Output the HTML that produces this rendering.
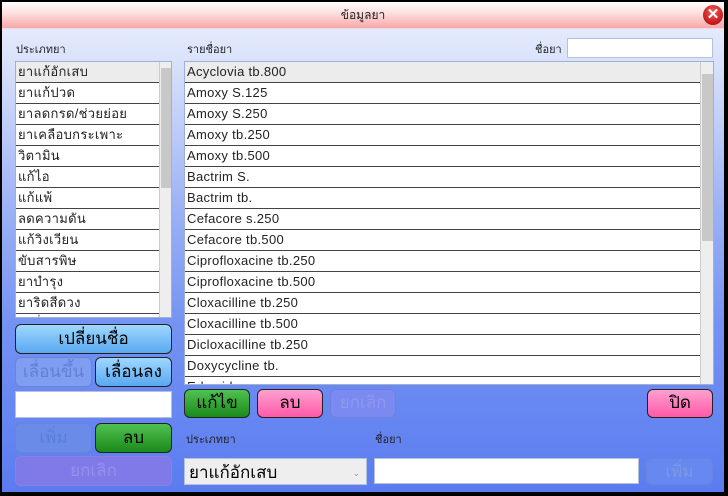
<!DOCTYPE html>
<html><head><meta charset="utf-8"><style>
*{box-sizing:border-box;margin:0;padding:0}
body{width:728px;height:496px;background:#000;position:relative;overflow:hidden;font-family:"Liberation Sans","Noto Sans CJK SC",sans-serif}
#win{position:absolute;left:2px;top:2px;width:722px;height:490px;background:linear-gradient(#eef2fd 0px,#d9e2fb 60px,#9fb4f6 200px,#7593f2 320px,#5a7cf0 490px);overflow:hidden}
#title{position:absolute;left:0;top:0;width:722px;height:27px;background:linear-gradient(#fff 0%,#fde0e0 40%,#f8a8a8 100%);border-bottom:1px solid #f0d8e8;text-align:center;font-size:12px;line-height:27px;color:#222}
#close{position:absolute;left:701px;top:3px;width:20px;height:20px;border-radius:50%;background:radial-gradient(circle at 50% 35%,#f06060,#c41818 70%,#901010);color:#fff;font-size:15px;font-weight:bold;line-height:20px;text-align:center}
.a{position:absolute}
.lbl{font-size:11px;color:#222}
.list{position:absolute;background:#fff;border:1px solid #9fb0d0}
.row{height:21px;border-bottom:1px solid #444;font-size:13px;line-height:20px;padding-left:2px;color:#222;background:#fff;letter-spacing:0.3px}
.row.sel{background:#ececec}
.sb{position:absolute;top:0;bottom:0;background:#eeeeee;border-left:1px solid #ccc}
.th{position:absolute;left:1px;right:0;background:#c8c8c8}
.btn{position:absolute;border:1.5px solid #222;border-radius:6px;text-align:center;font-size:17px;color:#000}
.blue{background:linear-gradient(#9ed8ff,#5aa8f0)}
.green{background:linear-gradient(#50c050,#1a8a1a)}
.pink{background:linear-gradient(#ffa0d0,#ff5aa8)}
.dis{border-color:#6a84d8;color:#5f7fd8}
.inp{position:absolute;background:#fff;border:1px solid #b4c0dc}
</style></head><body>
<div id="win">
<div id="title">ข้อมูลยา</div>
<div id="close">✕</div>
</div>
<div class="a lbl" style="left:16px;top:40px">ประเภทยา</div>
<div class="a lbl" style="left:187px;top:40px">รายชื่อยา</div>
<div class="a lbl" style="left:535px;top:40px">ชื่อยา</div>
<div class="inp" style="left:567px;top:38px;width:146px;height:20px"></div>

<div class="list" style="left:15px;top:61px;width:157px;height:257px;overflow:hidden">
<div style="width:143px">
<div class="row sel">ยาแก้อักเสบ</div><div class="row">ยาแก้ปวด</div><div class="row">ยาลดกรด/ช่วยย่อย</div><div class="row">ยาเคลือบกระเพาะ</div><div class="row">วิตามิน</div><div class="row">แก้ไอ</div><div class="row">แก้แพ้</div><div class="row">ลดความดัน</div><div class="row">แก้วิงเวียน</div><div class="row">ขับสารพิษ</div><div class="row">ยาบำรุง</div><div class="row">ยาริดสีดวง</div><div class="row">ยาอื่น</div>
</div>
<div class="sb" style="left:143px;width:13px"><div class="th" style="top:6px;height:120px"></div></div>
</div>

<div class="list" style="left:184px;top:61px;width:530px;height:324px;overflow:hidden">
<div style="width:515px">
<div class="row sel">Acyclovia tb.800</div><div class="row">Amoxy S.125</div><div class="row">Amoxy S.250</div><div class="row">Amoxy tb.250</div><div class="row">Amoxy tb.500</div><div class="row">Bactrim S.</div><div class="row">Bactrim tb.</div><div class="row">Cefacore s.250</div><div class="row">Cefacore tb.500</div><div class="row">Ciprofloxacine tb.250</div><div class="row">Ciprofloxacine tb.500</div><div class="row">Cloxacilline tb.250</div><div class="row">Cloxacilline tb.500</div><div class="row">Dicloxacilline tb.250</div><div class="row">Doxycycline tb.</div><div class="row">Erl aside s</div>
</div>
<div class="sb" style="left:515px;width:14px"><div class="th" style="top:12px;height:167px"></div></div>
</div>

<div class="btn blue" style="left:15px;top:324px;width:157px;height:30px;line-height:27px">เปลี่ยนชื่อ</div>
<div class="btn dis" style="left:15px;top:357px;width:77px;height:30px;line-height:27px;background:#7f9ef2">เลื่อนขึ้น</div>
<div class="btn blue" style="left:95px;top:357px;width:77px;height:30px;line-height:27px">เลื่อนลง</div>
<div class="inp" style="left:15px;top:391px;width:157px;height:27px"></div>
<div class="btn dis" style="left:15px;top:423px;width:77px;height:30px;line-height:27px;background:#6a8ce8;color:#5a7ed8">เพิ่ม</div>
<div class="btn green" style="left:95px;top:423px;width:77px;height:30px;line-height:27px">ลบ</div>
<div class="btn dis" style="left:15px;top:456px;width:157px;height:30px;line-height:27px;background:#7f7ae8;color:#9890ee;border-color:#8a80e0">ยกเลิก</div>

<div class="btn green" style="left:184px;top:389px;width:66px;height:29px;line-height:26px">แก้ไข</div>
<div class="btn pink" style="left:257px;top:389px;width:66px;height:29px;line-height:26px">ลบ</div>
<div class="btn dis" style="left:330px;top:389px;width:66px;height:29px;line-height:26px;background:#7a8af0;color:#9098ee;border-color:#7080e0">ยกเลิก</div>
<div class="btn pink" style="left:647px;top:389px;width:66px;height:29px;line-height:26px">ปิด</div>

<div class="a lbl" style="left:186px;top:430px">ประเภทยา</div>
<div class="a lbl" style="left:375px;top:430px">ชื่อยา</div>
<div class="inp" style="left:184px;top:458px;width:183px;height:27px;background:#eeeeee;font-size:17px;line-height:28px;padding-left:4px">ยาแก้อักเสบ<span style="position:absolute;right:6px;top:0;font-size:9px;color:#999">⌄</span></div>
<div class="inp" style="left:374px;top:458px;width:265px;height:26px"></div>
<div class="btn dis" style="left:646px;top:458px;width:67px;height:27px;line-height:25px;background:#6688f0;color:#7e98e8">เพิ่ม</div>
</body></html>
